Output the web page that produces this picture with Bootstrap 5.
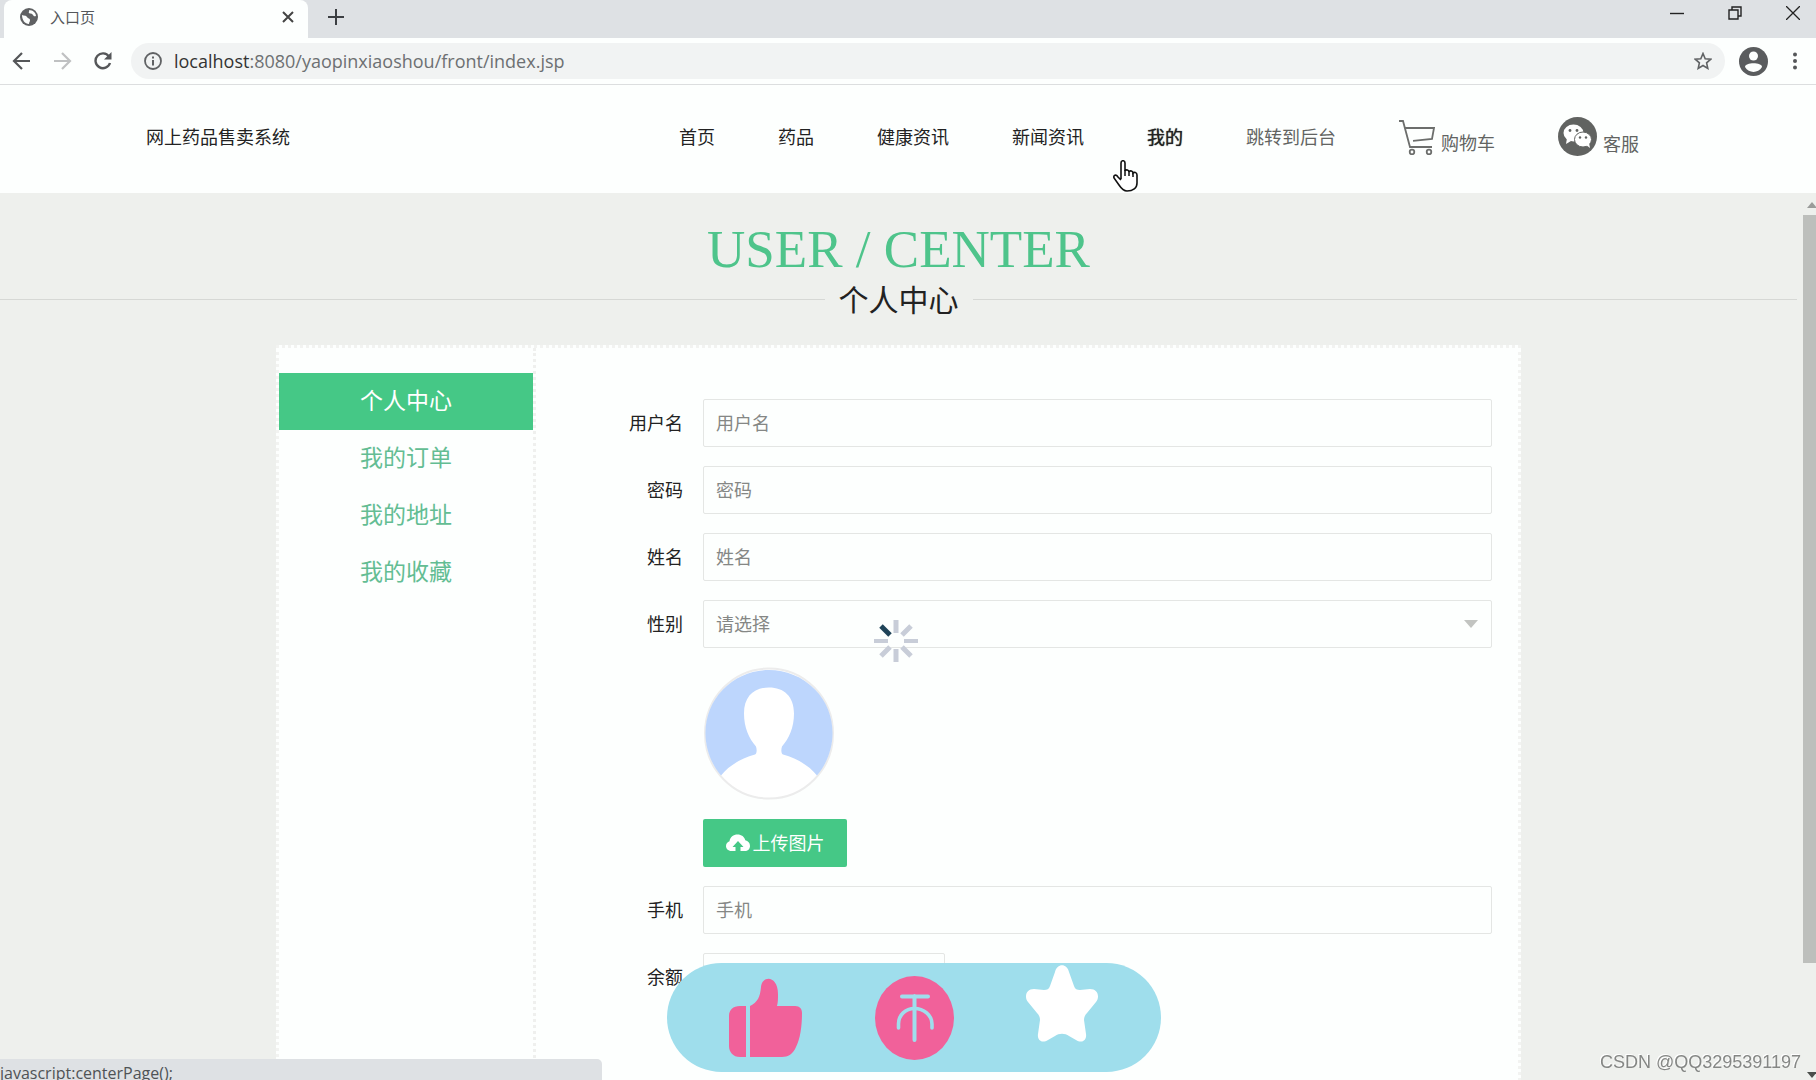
<!DOCTYPE html>
<html lang="zh-CN">
<head>
<meta charset="utf-8">
<meta name="viewport" content="width=device-width, initial-scale=1">
<title>入口页</title>
<link href="https://cdn.jsdelivr.net/npm/bootstrap@5.3.0/dist/css/bootstrap.min.css" rel="stylesheet">
<style>
  :root { --brand: #45c886; --page: #eef0ed; --paper: #fdfffe; --ink: #606264; }
  body { font-family: "Open Sans", "Noto Sans CJK SC", sans-serif; font-size: 18px; line-height: 24px; color: #222; background: var(--page); }
  svg { display: block; flex: none; }
  button.plain { border: 0; background: none; padding: 0; color: inherit; }

  .tabstrip { background: #dee1e4; height: 38px; padding-left: 4px; }
  .tab-on { background: var(--paper); width: 304px; border-radius: 8px 8px 0 0; padding: 0 14px 4px 16px; font-size: 15px; color: #55585b; }
  .tab-new { margin: 0 0 4px 20px; }
  .win-btns { gap: 44px; padding: 0 16px 12px 0; color: #222; }
  .toolbar { background: var(--paper); height: 47px; border-bottom: 1px solid #dcdedf; padding: 0 12px; color: var(--ink); }
  .nav-btns { gap: 22px; margin-right: 18px; }
  .omnibox { background: #f1f3f3; height: 36px; border-radius: 18px; padding: 0 13px; }
  .addr { font-size: 18px; color: #6d7072; }
  .addr b { font-weight: 400; color: #333; }
  .tools { gap: 18px; margin-left: 14px; }

  .site-head { background: var(--paper); height: 108px; padding: 0 177px 5px 146px; }
  .site-head a { color: #222; text-decoration: none; }
  .site-head a.soft { color: #626462; }
  .site-nav { gap: 63px; }
  .site-nav a.with-icon { display: flex; align-items: end; gap: 6px; }
  .site-nav .current { text-shadow: 0 0 1px #222; }

  .main-area { padding-right: 6px; }
  .scrollbar { width: 13px; padding: 8px 0 1px; }
  .scrollbar .thumb { background: #bdbfbc; height: 748px; margin-top: 7px; }
  .title-en { font-family: "Liberation Serif", serif; font-size: 53px; line-height: 60px; color: #4ec48b; margin: 26px 0 0; }
  .title-zh { font-size: 30px; line-height: 40px; color: #222; margin: 1px 0 0; font-weight: 400; }
  .title-row { gap: 14px; }
  .rule { height: 1px; background: #d6d8d5; }

  .panel { width: 1245px; max-width: 100%; margin: 25px auto 0; background: var(--paper); border: 3px dotted #f2f3f1; border-bottom: 0; }
  .side { width: 257px; padding-top: 25px; border-right: 3px dotted #eff0ee; }
  .side a { display: block; height: 57px; line-height: 55px; text-align: center; font-size: 23px; color: #63bd93; text-decoration: none; }
  .side a.on { background: var(--brand); color: #fff; }
  .form-area { padding: 51px 26px 0 67px; }
  .line { margin-bottom: 19px; }
  .line > .tag { width: 80px; text-align: right; margin-right: 20px; flex: none; }
  .line.bare { padding-left: 100px; }
  .box { height: 48px; border: 1px solid #e4e6e4; border-radius: 2px; background: transparent; padding: 0 12px; font-size: 18px; color: #858785; }
  select.box { appearance: none; }
  .box::placeholder { color: #858785; }
  .box-short { width: 242px; }
  .caret { right: 14px; top: 20px; pointer-events: none; }
  .btn-up { background: var(--brand); color: #fff; height: 48px; width: 144px; border-radius: 2px; font-size: 18px; gap: 3px; }

  .spin { left: 874px; top: 620px; }
  .hand { left: 1113px; top: 160px; }
  .pill { left: 667px; bottom: 8px; width: 494px; height: 109px; border-radius: 55px; background: #9fdeec; padding: 0 63px 0 62px; }
  .pill .star { margin-bottom: 28px; }
  .status { left: 0; bottom: 0; width: 602px; height: 21px; background: #dee1e4; border-radius: 0 5px 0 0; font-size: 16px; line-height: 29px; color: #4f5356; overflow: hidden; }
  .csdn { right: 15px; bottom: 6px; font-family: "Liberation Sans", sans-serif; font-size: 18px; color: #858785; text-shadow: -1px -1px 0 #fff; }
</style>
</head>
<body class="vh-100 overflow-hidden d-flex flex-column">

<div class="tabstrip d-flex align-items-stretch flex-shrink-0">
  <div class="tab-on d-flex align-items-center">
    <svg width="18" height="18" viewBox="0 0 18 18"><circle cx="9" cy="9" r="9" fill="#5f6163"/><path d="M2 7c2 1 4 0 5 2s3 1 3 3-1 2-1 4c-4 0-7-4-7-9zM9 2c1 1-1 2 0 3s3 0 4 2 2 1 3 1c0-3-3-6-7-6z" fill="#fdfffe"/></svg>
    <span class="ms-2 ps-1 me-auto">入口页</span>
    <button class="plain" aria-label="关闭标签页"><svg width="12" height="12" viewBox="0 0 12 12" stroke="#444" stroke-width="2"><path d="M1 1l10 10M11 1L1 11"/></svg></button>
  </div>
  <button class="plain tab-new" aria-label="新标签页"><svg width="16" height="16" viewBox="0 0 16 16" stroke="#3c3f42" stroke-width="2"><path d="M8 0v16M0 8h16"/></svg></button>
  <div class="win-btns d-flex align-items-center ms-auto">
    <button class="plain" aria-label="最小化"><svg width="14" height="14" viewBox="0 0 14 14" stroke="currentColor" stroke-width="1.4"><path d="M0 7.500h14"/></svg></button>
    <button class="plain" aria-label="还原"><svg width="14" height="14" viewBox="0 0 14 14" fill="none" stroke="currentColor" stroke-width="1.400"><path d="M1 4h9v9H1zM4 4V1h9v9h-3"/></svg></button>
    <button class="plain" aria-label="关闭"><svg width="14" height="14" viewBox="0 0 14 14" stroke="currentColor" stroke-width="1.300"><path d="M0 0l14 14M14 0L0 14"/></svg></button>
  </div>
</div>

<div class="toolbar d-flex align-items-center flex-shrink-0">
  <div class="nav-btns d-flex align-items-center">
    <button class="plain" aria-label="后退"><svg width="19" height="18" viewBox="0 0 19 18" fill="none" stroke="#555759" stroke-width="2.200"><path d="M18 9H2M10 1L2 9l8 8"/></svg></button>
    <button class="plain" aria-label="前进"><svg width="19" height="18" viewBox="0 0 19 18" fill="none" stroke="#bfc1c2" stroke-width="2.200"><path d="M1 9h16M9 1l8 8-8 8"/></svg></button>
    <button class="plain" aria-label="刷新"><svg width="19" height="18" viewBox="0 0 19 18" fill="none" stroke="#555759" stroke-width="2.400"><path d="M15 4.500A7.400 7.400 0 1 0 16 11"/><path d="M17.500 0v7.500H10z" fill="#555759" stroke="none"/></svg></button>
  </div>
  <div class="omnibox d-flex align-items-center flex-grow-1">
    <svg width="18" height="18" viewBox="0 0 18 18"><circle cx="9" cy="9" r="8" fill="none" stroke="#606264" stroke-width="1.800"/><path d="M8 8h2v5.500H8zM8 4.500h2v2H8z" fill="#606264"/></svg>
    <span class="addr ms-2 ps-1 me-auto"><b>localhost</b>:8080/yaopinxiaoshou/front/index.jsp</span>
    <button class="plain" aria-label="收藏"><svg width="18" height="18" viewBox="0 0 18 18" fill="none" stroke="#606264" stroke-width="1.600"><path d="M9 1.500l2.200 5.200 5.600.5-4.200 3.700 1.200 5.500L9 13.500l-4.800 2.900 1.200-5.500L1.200 7.200l5.600-.5z"/></svg></button>
  </div>
  <div class="tools d-flex align-items-center">
    <button class="plain" aria-label="用户"><svg width="29" height="29" viewBox="0 0 29 29"><circle cx="14.500" cy="14.500" r="14.500" fill="#5a5c5e"/><circle cx="14.500" cy="9" r="4.500" fill="#fdfffe"/><path d="M6 20c0-5 17-5 17 0-4 6.500-13 6.500-17 0z" fill="#fdfffe"/></svg></button>
    <button class="plain" aria-label="菜单"><svg width="18" height="18" viewBox="0 0 18 18" fill="#555759"><circle cx="9" cy="2.500" r="2"/><circle cx="9" cy="9" r="2"/><circle cx="9" cy="15.500" r="2"/></svg></button>
  </div>
</div>

<header class="site-head d-flex align-items-center justify-content-between flex-shrink-0">
  <a href="#">网上药品售卖系统</a>
  <nav class="site-nav d-flex align-items-center">
    <a href="#">首页</a>
    <a href="#">药品</a>
    <a href="#">健康资讯</a>
    <a href="#">新闻资讯</a>
    <a href="#" class="current">我的</a>
    <a href="#" class="soft">跳转到后台</a>
    <a href="#" class="soft with-icon"><svg width="36" height="36" viewBox="0 0 36 36" fill="none" stroke="#6c6e6c" stroke-width="1.800"><path d="M0 2h4l7 26h22M6.500 9H35l-2 11-19 1.800"/><circle cx="13" cy="33" r="2.300"/><circle cx="30" cy="33" r="2.300"/></svg>购物车</a>
    <a href="#" class="soft with-icon"><svg width="39" height="39" viewBox="0 0 39 39"><ellipse cx="19.500" cy="19.500" rx="19.500" ry="19.500" fill="#616361"/><ellipse cx="15.500" cy="16" rx="10" ry="8.500" fill="#fff"/><path d="M9 21l-1 6 5-3z" fill="#fff"/><ellipse cx="25" cy="22.500" rx="8.500" ry="7.500" fill="#fff" stroke="#616361"/><path d="M28 28l4 3-1-5z" fill="#fff"/><g fill="#616361"><circle cx="12" cy="13.500" r="1.400"/><circle cx="19" cy="13.500" r="1.400"/><circle cx="22" cy="20.500" r="1.200"/><circle cx="28" cy="20.500" r="1.200"/></g></svg>客服</a>
  </nav>
</header>

<div class="d-flex flex-grow-1 overflow-hidden">
  <main class="main-area flex-grow-1">
    <h1 class="title-en text-center fw-normal">USER / CENTER</h1>
    <div class="title-row d-flex align-items-center">
      <div class="rule flex-grow-1"></div>
      <h2 class="title-zh">个人中心</h2>
      <div class="rule flex-grow-1"></div>
    </div>

    <div class="panel d-flex">
      <nav class="side flex-shrink-0">
        <a href="#" class="on">个人中心</a>
        <a href="#">我的订单</a>
        <a href="#">我的地址</a>
        <a href="#">我的收藏</a>
      </nav>
      <form class="form-area flex-grow-1">
        <div class="line d-flex align-items-center"><label class="tag" for="user">用户名</label><input id="user" class="box flex-grow-1" placeholder="用户名"></div>
        <div class="line d-flex align-items-center"><label class="tag" for="pass">密码</label><input id="pass" type="password" class="box flex-grow-1" placeholder="密码"></div>
        <div class="line d-flex align-items-center"><label class="tag" for="name">姓名</label><input id="name" class="box flex-grow-1" placeholder="姓名"></div>
        <div class="line d-flex align-items-center"><label class="tag" for="sex">性别</label>
          <div class="position-relative flex-grow-1">
            <select id="sex" class="box w-100"><option>请选择</option><option>男</option><option>女</option></select>
            <svg class="caret position-absolute" width="14" height="8" viewBox="0 0 14 8"><path d="M0 0h14L7 8z" fill="#c2c4c1"/></svg>
          </div>
        </div>
        <div class="line bare">
          <svg width="132" height="133" viewBox="0 0 132 132">
            <ellipse cx="66" cy="66" rx="64" ry="65" fill="#fff" stroke="#ececec" stroke-width="2"/>
            <path d="M18 108C-4 82-2 44 20 22c25-26 67-26 92 0 22 22 24 60 2 86-8-10-20-17-34-21-2-1-2-5-1-8 7-8 12-19 12-33 0-17-10-26-25-26s-25 9-25 26c0 14 5 25 12 33 1 3 1 7-1 8-14 4-26 11-34 21z" fill="#bdd6fd"/>
          </svg>
        </div>
        <div class="line bare">
          <button type="button" class="btn btn-up d-flex align-items-center justify-content-center p-0">
            <svg width="24" height="18" viewBox="0 0 24 18"><path d="M8 17H5.500C2 17 0 14.500 0 12c0-2.500 1.500-4.200 3.500-4.800C4 3 7.500.5 11.500.5c4 0 7 2.300 7.800 5.800C22 6.800 24 9 24 12c0 3-2.300 5-5 5z" fill="#fff"/><path d="M9.500 17v-4H6.500L12 7l5.500 6h-3v4z" fill="#45c886"/></svg>
            上传图片
          </button>
        </div>
        <div class="line d-flex align-items-center"><label class="tag" for="tel">手机</label><input id="tel" class="box flex-grow-1" placeholder="手机"></div>
        <div class="line d-flex align-items-center"><label class="tag" for="money">余额</label><input id="money" class="box box-short"></div>
        <div class="line bare"><div class="box border-0"></div></div>
      </form>
    </div>
  </main>
  <div class="scrollbar flex-shrink-0 d-flex flex-column justify-content-between">
    <div>
      <svg width="13" height="7" viewBox="0 0 13 7"><path d="M4 7h10L9 1z" fill="#9a9c9a"/></svg>
      <div class="thumb"></div>
    </div>
    <svg width="13" height="7" viewBox="0 0 13 7"><path d="M4 0h10L9 6z" fill="#4c4e4c"/></svg>
  </div>
</div>

<svg class="spin position-fixed" width="44" height="42" viewBox="-22 -21 44 42" stroke="#c8cdd8" stroke-width="5">
  <path d="M0-21v13M0 8v13M6-6l9-9M6 6l9 9M-6 6l-9 9"/><path d="M8 0h14M-22 0h14" stroke-width="4"/><path d="M-6-6l-9-9" stroke="#1f4358"/>
</svg>

<svg class="hand position-fixed" width="25" height="32" viewBox="0 0 25 32"><path d="M8 19V3c0-3 4-3 4 0v8c1-2 4-1 4 1 1-2 4-1 4 1 1-1 4-1 4 2v8c0 5-4 8-10 8-4 0-6-3-8-6L1 18c-1-3 2-4 4-1l3 3" fill="#fff" stroke="#111" stroke-width="1.600"/><path d="M12 10v6M16 11v5M20 13v4" stroke="#111" stroke-width="1.500"/></svg>

<div class="pill position-fixed d-flex align-items-center justify-content-between">
  <button class="plain" aria-label="点赞"><svg width="73" height="79" viewBox="0 0 73 79" fill="#f1619a"><path d="M17 28v51h-6C4 79 0 74 0 68V38c0-6 4-10 11-10zM21 28c8-4 10-9 11-19 1-12 17-12 17 7 0 5 0 8-1 12h18c5 0 7 3 7 7 0 14-2 26-6 34-3 7-8 10-14 10H21z"/></svg></button>
  <button class="plain" aria-label="投币"><svg width="79" height="84" viewBox="0 0 79 84"><ellipse cx="39.500" cy="42" rx="39.500" ry="42" fill="#f1619a"/><path d="M27 20.500h26M39.500 20v44" fill="none" stroke="#9fdeec" stroke-width="4" stroke-linecap="round"/><path d="M23.500 52v-4c0-9 7-15.500 16-15.500S57 39 57 48v4" fill="none" stroke="#9fdeec" stroke-width="3.600" stroke-linecap="round"/></svg></button>
  <button class="plain star" aria-label="收藏"><svg width="72" height="78" viewBox="0 0 72 78"><path d="M29 7c2-9 12-9 14 0l5 14c1 3 3 4 6 4l10-1c8 0 10 8 6 13L61 48c-2 2-3 4-3 7l2 14c1 6-4 10-10 6l-7-4c-4-3-10-3-14 0l-7 4c-6 4-11 0-10-6l2-14c0-3-1-5-3-7L2 37c-4-5-2-13 6-13l10 1c3 0 5-1 6-4z" fill="#fff"/></svg></button>
</div>

<div class="status position-fixed">javascript:centerPage();</div>
<div class="csdn position-fixed">CSDN @QQ3295391197</div>

<script src="https://cdn.jsdelivr.net/npm/bootstrap@5.3.0/dist/js/bootstrap.bundle.min.js"></script>
</body>
</html>
